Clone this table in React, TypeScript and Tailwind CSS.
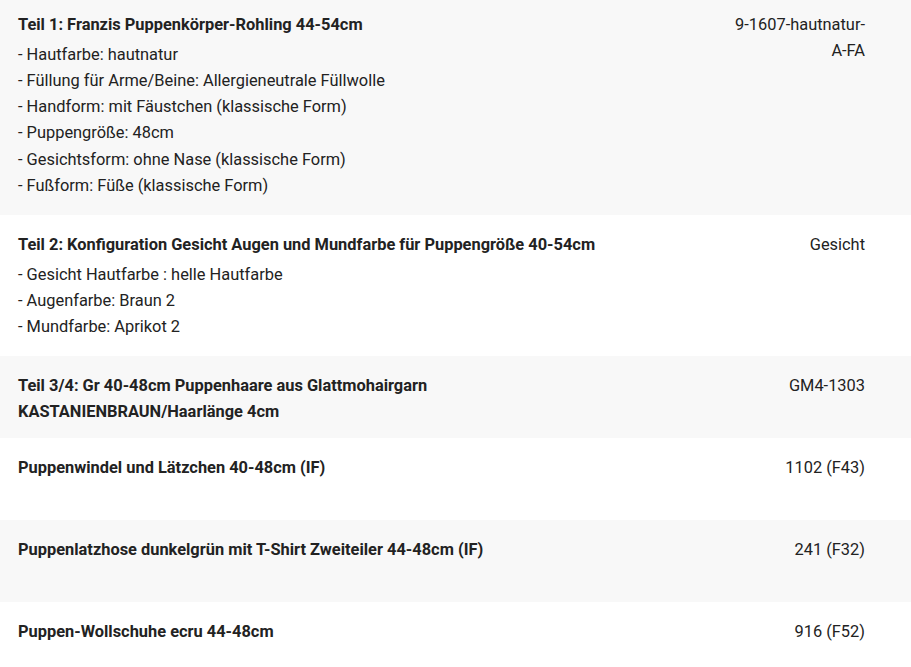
type Item = {
  title: string;
  details: string[];
  code: string;
};

const items: Item[] = [
  {
    title: "Teil 1: Franzis Puppenkörper-Rohling 44-54cm",
    details: [
      "- Hautfarbe: hautnatur",
      "- Füllung für Arme/Beine: Allergieneutrale Füllwolle",
      "- Handform: mit Fäustchen (klassische Form)",
      "- Puppengröße: 48cm",
      "- Gesichtsform: ohne Nase (klassische Form)",
      "- Fußform: Füße (klassische Form)",
    ],
    code: "9-1607-hautnatur-A-FA",
  },
  {
    title: "Teil 2: Konfiguration Gesicht Augen und Mundfarbe für Puppengröße 40-54cm",
    details: ["- Gesicht Hautfarbe : helle Hautfarbe", "- Augenfarbe: Braun 2", "- Mundfarbe: Aprikot 2"],
    code: "Gesicht",
  },
  {
    title: "Teil 3/4: Gr 40-48cm Puppenhaare aus Glattmohairgarn KASTANIENBRAUN/Haarlänge 4cm",
    details: [],
    code: "GM4-1303",
  },
  { title: "Puppenwindel und Lätzchen 40-48cm (IF)", details: [], code: "1102 (F43)" },
  {
    title: "Puppenlatzhose dunkelgrün mit T-Shirt Zweiteiler 44-48cm (IF)",
    details: [],
    code: "241 (F32)",
  },
  { title: "Puppen-Wollschuhe ecru 44-48cm", details: [], code: "916 (F52)" },
];

export default function App() {
  return (
    <div className="min-h-[667px] w-full overflow-hidden bg-white font-['Roboto',sans-serif] text-[16.4px] leading-[26.2px] text-[#222]">
      {items.map((item, i) => (
        <div
          key={item.title}
          className={`flex min-h-[82px] items-start justify-between pb-[12px] pl-[18px] pr-[46px] ${
            i % 2 === 0 ? "bg-[#f8f8f8]" : "bg-white"
          } ${i === 0 ? "pt-[12px]" : "pt-[17px]"}`}
        >
          <div className="min-w-0 max-w-[600px] flex-1">
            <div className="font-bold">{item.title}</div>
            {item.details.length > 0 && (
              <div className="mb-[4px] mt-[3.5px]">
                {item.details.map((d) => (
                  <div key={d}>{d}</div>
                ))}
              </div>
            )}
          </div>
          <div className="w-[138px] shrink-0 text-right">{item.code}</div>
        </div>
      ))}
    </div>
  );
}
